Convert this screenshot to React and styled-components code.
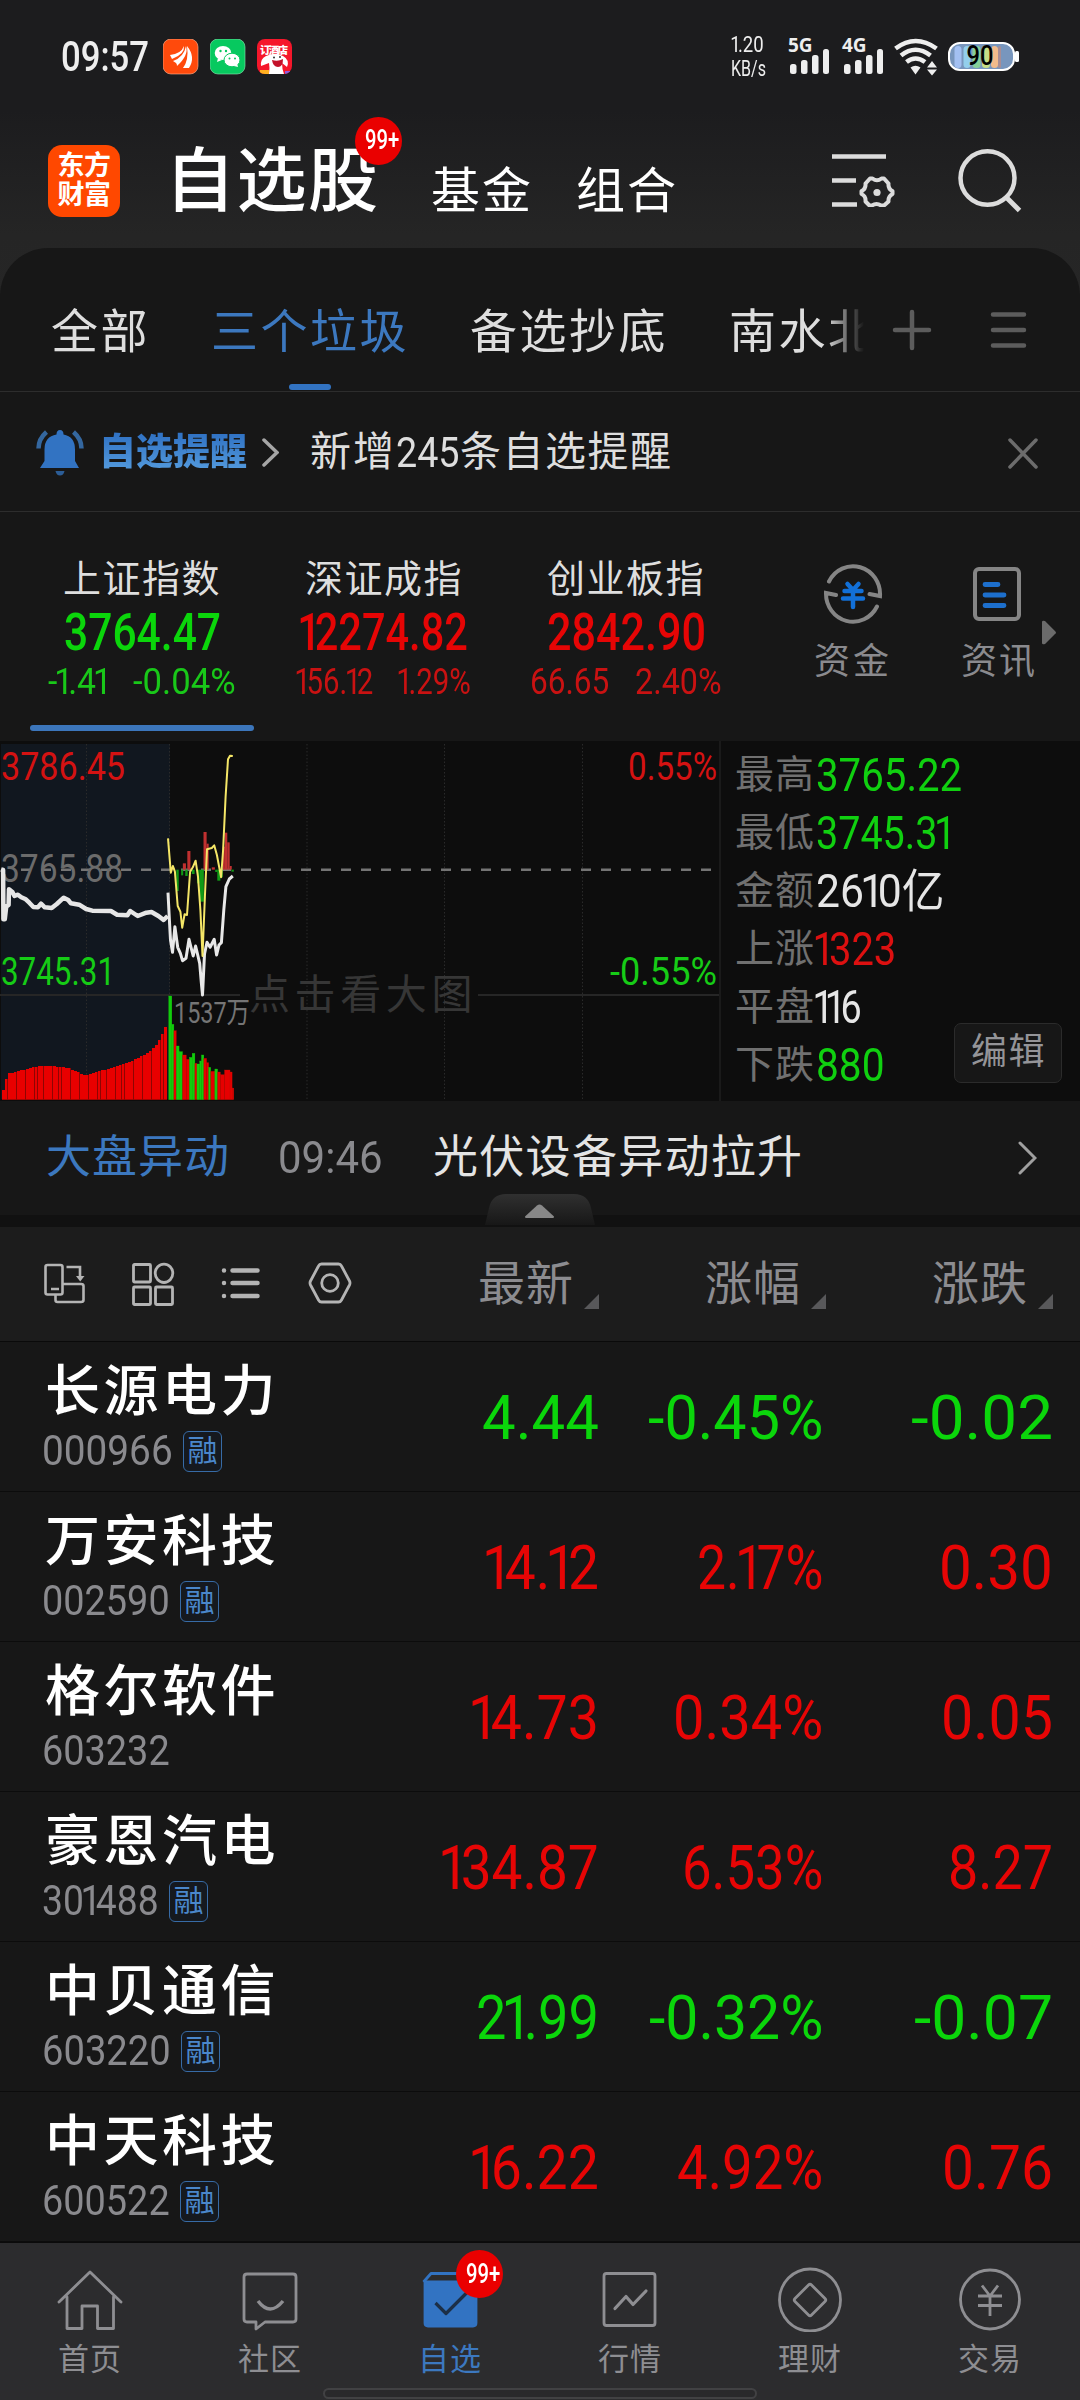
import React, { useLayoutEffect, useRef, useState } from "react";
import styled, { createGlobalStyle } from "styled-components";

const GREEN = "#0bd60b";
const RED = "#e60505";
const BLUE = "#3273c2";
const FONT = `Roboto, "Noto Sans CJK SC", sans-serif`;

const Global = createGlobalStyle`
  * { box-sizing: border-box; }
  html, body { margin: 0; padding: 0; background: #171717; }
  body { font-family: ${FONT}; width: 1080px; }
  svg { display: block; flex: none; }
`;

/* ---------- text set to a given width ---------- */
const FitBox = styled.span`
  display: inline-flex;
  flex: none;
  width: ${(p) => p.$w}px;
  height: ${(p) => p.$size * 1.1}px;
  line-height: ${(p) => p.$size * 1.1}px;
  font-size: ${(p) => p.$size}px;
  font-weight: ${(p) => p.$weight || 400};
  color: ${(p) => p.$color || "inherit"};
  white-space: nowrap;
`;
const FitInner = styled.span`
  display: inline-block;
  flex: none;
  transform-origin: 0 50%;
`;
const NarrowOne = styled.span`
  margin: 0 -0.15em 0 -0.09em;
`;

function Fit({ w, size, weight, color, children }) {
  const ref = useRef(null);
  const [scale, setScale] = useState(1);
  useLayoutEffect(() => {
    setScale(w / ref.current.offsetWidth);
  }, [w, size, weight, children]);
  return (
    <FitBox $w={w} $size={size} $weight={weight} $color={color}>
      <FitInner ref={ref} style={{ transform: `scaleX(${scale})` }}>
        {children.split(/(1)/).map((part, i) => (part === "1" ? <NarrowOne key={i}>1</NarrowOne> : part))}
      </FitInner>
    </FitBox>
  );
}

const Text = styled.span`
  flex: none;
  font-size: ${(p) => p.$size}px;
  line-height: ${(p) => p.$lh || p.$size * 1.2}px;
  letter-spacing: ${(p) => p.$ls || 0}px;
  font-weight: ${(p) => p.$weight || 400};
  color: ${(p) => p.$color || "#dedede"};
  white-space: nowrap;
`;

/* ---------- page ---------- */
const Page = styled.div`
  width: 1080px;
  height: 2400px;
  overflow: hidden;
  display: flex;
  flex-direction: column;
  background: linear-gradient(#1c1c1e 0, #1c1c1e 110px, #252525 235px, #262626 300px, #171717 301px);
`;

const StatusBar = styled.div`
  height: 114px;
  padding: 0 61px 0 61px;
  display: flex;
  align-items: center;
  color: #eee;
`;
const StatusApps = styled.div`
  display: flex;
  gap: 11px;
  margin-left: 14px;
  flex: 1;
  padding-top: 1px;
`;
const NetSpeed = styled.div`
  display: flex;
  flex-direction: column;
  align-items: center;
  width: 36px;
  margin-right: 22px;
  padding-top: 1px;
`;
const Signals = styled.div`
  display: flex;
  gap: 13px;
  margin-right: 11px;
`;
const Signal = styled.div`
  position: relative;
  width: 41px;
  height: 38px;
  font: 700 19px/15px "Open Sans", sans-serif;
  svg { margin-top: -5px; }
`;
const BatterySlot = styled.div`
  margin-left: 10px;
`;

const Header = styled.div`
  height: 135px;
  display: flex;
  align-items: flex-start;
  padding-left: 48px;
`;
const Logo = styled.div`
  width: 72px;
  height: 72px;
  margin-top: 31px;
  border-radius: 14px;
  background: #ff4800;
  color: #fff;
  display: flex;
  flex-direction: column;
  align-items: center;
  justify-content: center;
  font-size: 27px;
  font-weight: 700;
  line-height: 29px;
  letter-spacing: -0.5px;
`;
const MainTitle = styled.div`
  position: relative;
  margin: 25px 0 0 45px;
  width: 266px;
  height: 86px;
`;
const Badge = styled.div`
  position: absolute;
  left: ${(p) => p.$x}px;
  top: ${(p) => p.$y}px;
  width: 47px;
  height: 48px;
  border-radius: 50%;
  background: #ea0000;
  color: #fff;
  display: flex;
  align-items: center;
  justify-content: center;
  padding-left: 6px;
`;
const HeaderLinks = styled.div`
  display: flex;
  gap: 43px;
  margin-top: 48px;
  flex: 1;
`;
const HeaderIcons = styled.div`
  display: flex;
  gap: 63px;
  margin: 33px 58px 0 0;
`;

const Panel = styled.div`
  flex: 1;
  border-radius: 48px 48px 0 0;
  background: #171717;
  display: flex;
  flex-direction: column;
`;

const Tabs = styled.div`
  height: 144px;
  border-bottom: 1px solid #2d2d2d;
  display: flex;
  align-items: center;
`;
const TabScroll = styled.div`
  width: 866px;
  height: 100%;
  display: flex;
  gap: 61px;
  padding-left: 51px;
  overflow: hidden;
  mask-image: linear-gradient(90deg, #000 825px, transparent 864px);
`;
const Tab = styled.div`
  flex: none;
  display: flex;
  flex-direction: column;
  align-items: center;
  padding-top: 56px;
  height: 143px;
`;
const TabMark = styled.div`
  width: 42px;
  height: 6px;
  margin-top: 24px;
  border-radius: 3px;
  background: ${BLUE};
`;
const TabTools = styled.div`
  display: flex;
  gap: 57px;
  padding: 21px 0 0 25px;
`;

const AlertRow = styled.div`
  height: 120px;
  border-bottom: 1px solid #2d2d2d;
  display: flex;
  align-items: center;
  padding: 2px 41px 0 35px;
`;
const AlertTag = styled.span`
  margin: 0 15px 0 15px;
  font-size: 37px;
  line-height: 46px;
  font-weight: 900;
  background: linear-gradient(#3173c4 10%, #549bdd 90%);
  -webkit-background-clip: text;
  color: transparent;
`;
const AlertText = styled.div`
  flex: 1;
  display: flex;
  align-items: center;
  margin-left: 31px;
`;

const Indices = styled.div`
  height: 229px;
  display: flex;
  padding-left: 21px;
`;
const IndexCard = styled.div`
  width: 242px;
  display: flex;
  flex-direction: column;
  align-items: center;
  padding-top: 42px;
`;
const IndexValue = styled.div`
  height: 56px;
  display: flex;
  align-items: center;
  margin-top: 1px;
`;
const IndexDelta = styled.div`
  height: 36px;
  display: flex;
  gap: 26px;
  align-items: center;
  margin-top: 4px;
`;
const IndexMark = styled.div`
  width: 224px;
  height: 6px;
  margin-top: 24px;
  border-radius: 3px;
  background: #3c76bb;
`;
const Shortcut = styled.div`
  width: ${(p) => p.$w}px;
  display: flex;
  flex-direction: column;
  align-items: center;
  padding-top: 51px;
  gap: 18px;
  svg { margin-right: ${(p) => p.$shift || 0}px; }
`;
const MoreArrow = styled.div`
  margin-left: 2px;
`;

const ChartArea = styled.div`
  height: 360px;
  display: flex;
  background: #0d0d0d;
`;
const Quotes = styled.div`
  position: relative;
  width: 361px;
  border-left: 2px solid #1a1a1a;
  padding: 5px 0 0 14px;
`;
const QuoteLine = styled.div`
  height: 58px;
  display: flex;
  align-items: center;
  gap: 1px;
`;
const EditButton = styled.button`
  position: absolute;
  left: 233px;
  top: 282px;
  width: 108px;
  height: 60px;
  border: 1px solid #2b2b2b;
  border-radius: 7px;
  background: #171717;
  padding: 0 0 1px 1px;
  font-family: ${FONT};
`;

const Ticker = styled.div`
  position: relative;
  height: 114px;
  display: flex;
  align-items: center;
  padding: 0 43px 0 46px;
`;
const TickerTime = styled.div`
  display: flex;
  margin: 0 50px 0 48px;
`;
const TickerTitle = styled.div`
  flex: 1;
  display: flex;
`;
const Handle = styled.div`
  position: absolute;
  left: 484px;
  top: 92px;
`;
const Strip = styled.div`
  height: 12px;
  background: #111;
`;

const TableHead = styled.div`
  height: 115px;
  background: #1c1c1c;
  border-bottom: 1px solid #0a0a0a;
  display: flex;
  align-items: center;
  padding-left: 43px;
`;
const HeadTools = styled.div`
  width: 330px;
  display: flex;
  gap: 45.5px;
`;
const HeadCell = styled.div`
  width: 227px;
  display: flex;
  justify-content: flex-end;
  align-items: center;
  gap: 10px;
  svg { margin-top: 35px; }
`;

const Row = styled.div`
  height: 150px;
  border-bottom: 1px solid #0c0c0c;
  display: flex;
  padding: 0 26px 0 42px;
`;
const NameCell = styled.div`
  width: 330px;
  display: flex;
  flex-direction: column;
  padding-top: 14px;
`;
const StockName = styled(Text)`
  margin-left: 3px;
`;
const CodeLine = styled.div`
  height: 44px;
  margin-top: 3px;
  display: flex;
  align-items: center;
  gap: 10px;
`;
const Tag = styled.span`
  width: 39px;
  height: 41px;
  border: 1.5px solid #376ba6;
  border-radius: 6px;
  color: #4a87cb;
  background: #15191f;
  font-size: 30px;
  line-height: 37px;
  text-align: center;
`;
const ValueCell = styled.div`
  width: 227px;
  height: 150px;
  display: flex;
  justify-content: flex-end;
  align-items: center;
  padding: 2px ${(p) => p.$pad}px 0 0;
`;

const Nav = styled.div`
  position: relative;
  height: 158px;
  margin-top: auto;
  border-top: 1px solid #0b0b0b;
  background: #2c2c2e;
  display: flex;
`;
const NavItem = styled.div`
  position: relative;
  width: 180px;
  height: 157px;
  display: flex;
  flex-direction: column;
  align-items: center;
  padding-top: 23px;
  gap: 6px;
`;
const HomeBar = styled.div`
  position: absolute;
  left: 323px;
  bottom: 1px;
  width: 434px;
  height: 11px;
  border-radius: 6px;
  border: 2px solid #414143;
  background: #29292b;
`;

/* ---------- status icons ---------- */
const AppFund = () => (
  <svg width="36" height="36" viewBox="0 0 36 36">
    <rect width="35" height="35" rx="8" fill="#ff4a0c" stroke="#ffb394" strokeWidth=".6" />
    <path d="M7 16q11-1 14-9q1 8-12 13zM10 22q11-4 13-15q3 9-9 20q0-2-1-3zM20 29q6-8 4-22q9 11 2 22z" fill="#fff" />
  </svg>
);
const AppChat = () => (
  <svg width="36" height="36" viewBox="0 0 36 36">
    <rect width="35" height="35" rx="8" fill="#07c95f" stroke="#8ee5b4" strokeWidth=".6" />
    <ellipse cx="13" cy="14" rx="8.3" ry="7" fill="#fff" />
    <path d="M8 19l-1 4 5-2z" fill="#fff" />
    <ellipse cx="22" cy="21" rx="8" ry="6.8" fill="#fff" stroke="#07c95f" strokeWidth="1" />
    <path d="M24 27l4 1-1-4z" fill="#fff" />
    <g fill="#07c95f"><circle cx="10.5" cy="12" r="1.2" /><circle cx="16" cy="12" r="1.2" /><circle cx="19.5" cy="19.5" r="1" /><circle cx="25" cy="19.5" r="1" /></g>
  </svg>
);
const AppHotel = () => (
  <svg width="36" height="36" viewBox="0 0 36 36">
    <defs><clipPath id="hc"><rect width="35" height="35" rx="8" /></clipPath></defs>
    <g clipPath="url(#hc)">
      <rect width="36" height="36" fill="#f5172b" />
      <path d="M4 27Q3 20 9 17q9-4 17 0q7 4 4 11l-5-4q0 6 2 11H12q1-6 0-11z" fill="#fff" />
      <path d="M15 21q6 2 11-1q0 8-5 8q-5 0-6-7z" fill="#c3122a" />
      <circle cx="17" cy="18.500" r="1" fill="#333" /><circle cx="23" cy="18" r="1" fill="#333" />
      <path d="M3 31h9v5H3z" fill="#ffb020" /><path d="M28 32h7v4h-7z" fill="#8c5be0" />
      <text x="3" y="14.5" fontSize="10.5" fontWeight="900" fill="#fff" textLength="28" fontFamily='"Noto Sans CJK SC", sans-serif'>订酒店</text>
    </g>
  </svg>
);
const Bars = () => (
  <svg width="41" height="27" viewBox="0 0 41 27" fill="#eee">
    <rect x="2" y="16" width="6.5" height="10" rx="2.5" />
    <rect x="13" y="12" width="6.5" height="14" rx="2.5" />
    <rect x="24" y="7" width="6.5" height="19" rx="2.5" />
    <rect x="35" y="1" width="6" height="25" rx="2.5" />
  </svg>
);
const Wifi = () => (
  <svg width="44" height="38" viewBox="0 0 44 38" fill="none" stroke="#eee" strokeWidth="4.6">
    <path d="M1.5 10.5Q21.500-4.500 42.500 10.500" />
    <path d="M7 17.500Q21.500 6 36.500 17.500" />
    <path d="M12.500 24Q21.500 17 31 24" />
    <path d="M16.500 29.500q5-3.500 10 0l-5 7z" fill="#eee" stroke="none" />
    <path d="M38 23l5 6.500H33zM33 31.500h10l-5 6z" fill="#eee" stroke="none" />
  </svg>
);
const Battery = () => (
  <svg width="71" height="30" viewBox="0 0 71 30">
    <rect x="1" y="1" width="65" height="27" rx="11" fill="#7896bd" stroke="#fff" strokeWidth="2" />
    <rect x="67" y="9" width="4" height="11" rx="1.500" fill="#fff" />
    <rect x="6.500" y="4" width="7" height="22" rx="3.500" fill="#a3c0f2" />
    <rect x="15.500" y="4" width="7" height="22" rx="3.500" fill="#93cfec" />
    <rect x="24.500" y="4" width="8" height="22" rx="3.500" fill="#86cf98" />
    <rect x="34" y="4" width="8" height="22" rx="3.500" fill="#c6de87" />
    <rect x="43" y="4" width="7" height="22" rx="3.500" fill="#f2bb8b" />
    <rect x="50" y="4" width="3" height="22" rx="1.500" fill="#a88d94" />
    <text x="18.500" y="22.500" fontSize="27" fontWeight="500" textLength="27" lengthAdjust="spacingAndGlyphs" fill="#000">90</text>
  </svg>
);

/* ---------- header icons ---------- */
const ListGear = () => (
  <svg width="64" height="60" viewBox="0 0 64 60" fill="none" stroke="#dcdcdc" strokeWidth="4.500">
    <path d="M1 9.500h54M1 33.500h24M1 57.500h25" />
    <path strokeWidth="4" strokeLinejoin="round" d="M39 31.500h2.500q4.500 3.500 9 0H53l4.500 5q-.5 5.500 4 7.500v3q-4.500 2.500-4 7.500l-4.500 4H50q-4.500-3-9 0h-2.500l-4-4q.5-5.500-4-7.500v-3q4.500-2 4-7.500z" />
    <circle cx="46" cy="45.500" r="3.600" fill="#dcdcdc" stroke="none" />
  </svg>
);
const Search = () => (
  <svg width="64" height="66" viewBox="0 0 64 66" fill="none" stroke="#dcdcdc" strokeWidth="4.500">
    <ellipse cx="29.500" cy="31" rx="27" ry="26.800" />
    <path d="M48 50l13.500 13.500" strokeWidth="5" />
  </svg>
);

const Bell = () => (
  <svg width="49" height="46" viewBox="0 0 49 46">
    <path d="M25 0q3.500 0 3.500 4.500q11.500 2 11.500 15V31l4 7H5l4.500-7V19.500q0-13 12-15Q21.500 0 25 0z" fill={BLUE} />
    <path d="M20.500 41h9q-1 4.500-4.500 4.500T20.500 41z" fill="#2c5d96" />
    <path d="M3.500 18.500Q3.500 9 11.500 2M46.500 18.500Q46.500 9 38.500 2" fill="none" stroke="#34679f" strokeWidth="4.500" />
  </svg>
);
const Chevron = ({ w, h, sw, color }) => (
  <svg width={w} height={h} viewBox={`0 0 ${w} ${h}`} fill="none" stroke={color} strokeWidth={sw} strokeLinecap="round">
    <path d={`M2 2L${w - 2} ${h / 2}L2 ${h - 2}`} />
  </svg>
);

/* ---------- chart ---------- */
const SX = 2.904;
const px = (x) => x / SX;
const py = (y) => y / 3 - 11;
const line = (pts) => pts.map(([x, y]) => `${px(x).toFixed(1)},${py(y).toFixed(1)}`).join(" ");

const AUCTION = [[3, 418], [9, 420], [10, 568], [14, 568], [18, 530], [25, 525], [26, 478], [36, 486], [42, 498], [52, 494], [62, 502], [75, 508], [85, 518], [97, 531], [110, 532], [119, 521], [130, 532], [150, 534], [165, 522], [185, 503], [198, 510], [206, 520], [230, 524], [250, 537], [268, 542], [322, 543], [340, 554], [370, 556], [378, 543], [400, 558], [425, 548], [440, 546], [460, 558], [475, 570], [487, 558]];
const PRICE = [[488, 488], [492, 570], [495, 630], [501, 667], [508, 590], [516, 652], [524, 670], [530, 692], [540, 685], [549, 628], [561, 678], [568, 648], [580, 700], [585, 760], [588, 795], [594, 672], [601, 637], [610, 652], [622, 628], [629, 675], [636, 645], [643, 638], [650, 540], [656, 470], [666, 447], [676, 438]];
const AVERAGE = [[488, 325], [496, 428], [502, 408], [508, 425], [516, 528], [524, 545], [529, 593], [536, 553], [543, 555], [552, 425], [560, 412], [568, 392], [575, 440], [582, 540], [588, 678], [595, 500], [601, 358], [615, 354], [622, 346], [630, 375], [642, 442], [648, 360], [655, 200], [662, 88], [668, 77], [676, 78]];
const MOMENTUM = [[531, 540, 400, 1], [544, 553, 363, 1], [591, 600, 306, 1], [600, 606, 341, 1], [615, 624, 412, 1], [647, 653, 350, 1], [653, 660, 308, 1], [660, 667, 337, 1], [667, 673, 408, 1], [512, 519, 483, 0], [526, 532, 436, 0], [538, 545, 438, 0], [557, 565, 432, 0], [572, 580, 460, 0], [580, 592, 515, 0], [625, 631, 426, 0], [631, 640, 452, 0], [640, 647, 442, 0], [672, 679, 425, 0]];
const ENVELOPE = [[8, 1083], [16, 1052], [24, 1031], [50, 1024], [90, 1013], [120, 1008], [160, 1009], [200, 1015], [245, 1036], [270, 1030], [300, 1020], [350, 1005], [400, 985], [440, 960], [460, 935], [475, 900], [489, 866]];
const VOLUME = [[490, 499, 798, 0], [499, 505, 883, 0], [505, 512, 902, 1], [512, 520, 948, 0], [520, 530, 965, 0], [530, 541, 975, 1], [541, 550, 988, 1], [550, 558, 982, 0], [558, 566, 970, 0], [566, 572, 1000, 1], [572, 580, 1002, 0], [580, 585, 993, 0], [585, 592, 975, 0], [592, 600, 985, 1], [600, 606, 998, 1], [606, 612, 1012, 0], [612, 624, 1024, 1], [624, 632, 1017, 0], [632, 640, 1026, 1], [640, 652, 1034, 1], [652, 668, 1020, 1], [668, 674, 1026, 1], [674, 679, 1074, 1]];

function envelopeAt(x) {
  for (let i = 1; i < ENVELOPE.length; i++) {
    const [x0, y0] = ENVELOPE[i - 1];
    const [x1, y1] = ENVELOPE[i];
    if (x <= x1) return y0 + ((y1 - y0) * (x - x0)) / (x1 - x0);
  }
  return 866;
}
const AUCTION_BARS = Array.from({ length: 55 }, (_, i) => 2 + i * 3);

const ChartText = ({ x, y, w, size = 39, fill, children }) => (
  <text x={x} y={y} fontSize={size} fill={fill} textLength={w} lengthAdjust="spacingAndGlyphs">{children}</text>
);

const Chart = () => (
  <svg width="719" height="360" viewBox="0 0 719 360" fontFamily={FONT}>
    <rect x="1" y="3" width="169" height="355" fill="#11171f" />
    {[86.5, 169.5, 307, 444.5, 582.5].map((x) => (
      <path key={x} d={`M${x} 3V358`} stroke="#2a2a2a" strokeWidth="1" strokeDasharray="1.5 2" />
    ))}
    <path d="M0 254H240M478 254H719" stroke="#262626" strokeWidth="2" />
    <path d="M21 128.700H713" stroke="#747474" strokeWidth="2.500" strokeDasharray="10 10" />
    <ChartText x={1} y={39} w={124} fill="#d41212">3786.45</ChartText>
    <ChartText x={1} y={141} w={122} fill="#6b6b6b">3765.88</ChartText>
    <ChartText x={1} y={244} w={114} fill="#16cc16">3745.31</ChartText>
    <ChartText x={628} y={39} w={89} fill="#d41212">0.55%</ChartText>
    <ChartText x={610} y={244} w={107} fill="#16cc16">-0.55%</ChartText>
    {AUCTION_BARS.map((x, i) => {
      const top = Math.round(py(envelopeAt((x + 1) * SX)));
      return (
        <React.Fragment key={x}>
          <rect x={x} y={top} width="3" height={358.7 - top} fill="#e80000" />
          {(i % 3 === 1 || i % 7 === 4) && <rect x={x + 2} y={top} width="1" height={358.7 - top} fill="#8d0503" />}
        </React.Fragment>
      );
    })}
    {VOLUME.map(([a, b, top, up]) => (
      <rect key={a} x={px(a)} y={py(top)} width={px(b - a)} height={py(1109) - py(top)} fill={up ? "#e60000" : "#12cc0c"} stroke={up ? "#c01000" : "#12cc0c"} strokeWidth=".3" />
    ))}
    {MOMENTUM.map(([a, b, v, up]) => (
      <rect key={`${a}${v}`} x={px(a)} y={py(Math.min(v, 419))} width={px(b - a)} height={Math.abs(v - 419) / 3} fill={up ? "#c03030" : "#119a16"} />
    ))}
    <polyline points={line(AUCTION)} fill="none" stroke="#e6e6e6" strokeWidth="4.500" strokeLinejoin="round" />
    <polyline points={line(PRICE)} fill="none" stroke="#e8e8e8" strokeWidth="3" strokeLinejoin="round" />
    <polyline points={line(AVERAGE)} fill="none" stroke="#f4e667" strokeWidth="2" strokeLinejoin="round" />
    <ChartText x={174} y={282} w={76} size={29} fill="#757575">1537万</ChartText>
    <text x="249" y="268" fontSize="41" letterSpacing="4.600" fill="#363636">点击看大图</text>
  </svg>
);

/* ---------- table header icons ---------- */
const ToolSwap = () => (
  <svg width="42" height="42" viewBox="0 0 42 42" fill="none" stroke="#b4b4b4" strokeWidth="2.600">
    <rect x="2.500" y="3" width="17" height="29.500" rx="2" />
    <path d="M8 27h8M12.500 32.500v5.500q0 2 2 2h23.500q2.500 0 2.500-2V24q0-2-2.500-2H20M23.500 5h13.500v12" />
    <path d="M33 14h8.500l-4.300 5.500z" fill="#b4b4b4" stroke="none" />
  </svg>
);
const ToolGrid = () => (
  <svg width="44" height="44" viewBox="0 0 44 44" fill="none" stroke="#b4b4b4" strokeWidth="2.800">
    <rect x="2.500" y="2.500" width="17" height="17.500" rx="1" />
    <ellipse cx="33" cy="11.300" rx="8.800" ry="9.200" />
    <rect x="2.500" y="25" width="17" height="17.500" rx="1" />
    <rect x="24.500" y="25" width="17" height="17.500" rx="1" />
  </svg>
);
const ToolList = () => (
  <svg width="42" height="42" viewBox="0 0 42 42" stroke="#b4b4b4" strokeWidth="4.500" strokeLinecap="round">
    <path d="M4 8.500v.1M4 21v.1M4 34v.1M12.500 8.500h25M12.500 21h25M12.500 34h25" />
  </svg>
);
const ToolHex = () => (
  <svg width="44" height="42" viewBox="0 0 44 42" fill="none" stroke="#b4b4b4" strokeWidth="2.800" strokeLinejoin="round">
    <path d="M13.500 2h17q2 0 3 2l8 15q1 2 0 4l-8 15q-1 2-3 2h-17q-2 0-3-2L2.500 23q-1-2 0-4l8-15q1-2 3-2z" />
    <circle cx="22" cy="21" r="8.300" />
  </svg>
);
const Corner = () => (
  <svg width="16" height="16" viewBox="0 0 16 16"><path d="M15 0v15H0z" fill="#58585a" /></svg>
);

/* ---------- nav icons ---------- */
const NavIcon = styled.svg.attrs({ width: 66, height: 66, viewBox: "0 0 66 66" })`
  fill: none;
  stroke: ${(p) => p.$color || "#8e8e92"};
  stroke-width: 2.8;
  stroke-linejoin: round;
`;
const NAV = [
  ["首页", <NavIcon><path strokeLinecap="round" d="M2 36L33 6l31 30M10 31v31.500h15V40h15.500v22.500h16V31" /></NavIcon>],
  ["社区", <NavIcon><path d="M10 8h46q3 0 3 3v42q0 3-3 3H28l-9 7v-7h-9q-3 0-3-3V11q0-3 3-3z" /><path strokeWidth="3.400" d="M21 35q12 16 25 0" /></NavIcon>],
  ["自选", <NavIcon $color={BLUE}><path d="M6.500 16L14 7.500h46" /><path d="M8 16h51v41q0 3-3 3H11q-3 0-3-3z" fill={BLUE} /><path d="M18.500 37L29 47.500l21-21" stroke="#1c2f47" strokeWidth="3.200" /></NavIcon>],
  ["行情", <NavIcon><rect x="7" y="7.500" width="51" height="52" rx="2.500" /><path strokeWidth="3.200" strokeLinecap="round" d="M18 42.500L29 30.500l7 8L49 25" /></NavIcon>],
  ["理财", <NavIcon><ellipse cx="33" cy="34" rx="30.500" ry="31" /><path d="M31.500 19q1.500-1.500 3 0l13.500 13.500q1.500 1.500 0 3L34.500 49q-1.500 1.500-3 0L18 35.500q-1.500-1.500 0-3z" /></NavIcon>],
  ["交易", <NavIcon><circle cx="33" cy="33.500" r="29.500" /><path d="M25 19.500L33 30l8-10.500M33 30v20M21 30h24M21 39.500h24" /></NavIcon>],
];

/* ---------- data ---------- */
const INDICES = [
  { name: "上证指数", value: "3764.47", w: 157, a: "-1.41", aw: 59, b: "-0.04%", bw: 103, color: GREEN, on: true },
  { name: "深证成指", value: "12274.82", w: 167, a: "156.12", aw: 76, b: "1.29%", bw: 72, color: RED },
  { name: "创业板指", value: "2842.90", w: 159, a: "66.65", aw: 79, b: "2.40%", bw: 87, color: RED },
];
const QUOTES = [
  ["最高", "3765.22", 146, "#10d010"],
  ["最低", "3745.31", 134, "#10d010"],
  ["金额", "2610亿", 128, "#e6e6e6"],
  ["上涨", "1323", 80, "#dc1010"],
  ["平盘", "116", 46, "#e6e6e6"],
  ["下跌", "880", 69, "#10d010"],
];
const STOCKS = [
  ["长源电力", "000966", 131, true, GREEN, ["4.44", 117], ["-0.45%", 175], ["-0.02", 142]],
  ["万安科技", "002590", 128, true, RED, ["14.12", 112], ["2.17%", 126], ["0.30", 114]],
  ["格尔软件", "603232", 128, false, RED, ["14.73", 126], ["0.34%", 150], ["0.05", 112]],
  ["豪恩汽电", "301488", 117, true, RED, ["134.87", 156], ["6.53%", 141], ["8.27", 105]],
  ["中贝通信", "603220", 129, true, GREEN, ["21.99", 123], ["-0.32%", 174], ["-0.07", 139]],
  ["中天科技", "600522", 128, true, RED, ["16.22", 126], ["4.92%", 146], ["0.76", 111]],
];

export default function App() {
  return (
    <>
      <Global />
      <Page>
        <StatusBar>
          <Fit w={88} size={43} weight={500}>09:57</Fit>
          <StatusApps><AppFund /><AppChat /><AppHotel /></StatusApps>
          <NetSpeed>
            <Fit w={32} size={22}>1.20</Fit>
            <Fit w={35} size={22}>KB/s</Fit>
          </NetSpeed>
          <Signals>
            <Signal>5G<Bars /></Signal>
            <Signal>4G<Bars /></Signal>
          </Signals>
          <Wifi />
          <BatterySlot><Battery /></BatterySlot>
        </StatusBar>

        <Header>
          <Logo><span>东方</span><span>财富</span></Logo>
          <MainTitle>
            <Text $size={70} $ls={1.5} $lh={86} $color="#fff" $weight={500}>自选股</Text>
            <Badge $x={190} $y={-22}><Fit w={34} size={28} weight={500}>99+</Fit></Badge>
          </MainTitle>
          <HeaderLinks>
            <Text $size={49} $ls={2} $lh={60} $color="#fff">基金</Text>
            <Text $size={49} $ls={2} $lh={60} $color="#fff">组合</Text>
          </HeaderLinks>
          <HeaderIcons><ListGear /><Search /></HeaderIcons>
        </Header>

        <Panel>
          <Tabs>
            <TabScroll>
              <Tab><Text $size={47} $ls={2.5}>全部</Text></Tab>
              <Tab><Text $size={47} $ls={2.5} $color="#3c78bf">三个垃圾</Text><TabMark /></Tab>
              <Tab><Text $size={47} $ls={2.5}>备选抄底</Text></Tab>
              <Tab><Text $size={47} $ls={2.5}>南水北</Text></Tab>
            </TabScroll>
            <TabTools>
              <svg width="42" height="42" viewBox="0 0 42 42" stroke="#5c5c5c" strokeWidth="4.500" strokeLinecap="round"><path d="M4 21h34M21 3v36" /></svg>
              <svg width="40" height="42" viewBox="0 0 40 42" stroke="#5c5c5c" strokeWidth="4.500" strokeLinecap="round"><path d="M3 5.500h31M3 21h31M3 36.500h31" /></svg>
            </TabTools>
          </Tabs>

          <AlertRow>
            <Bell />
            <AlertTag>自选提醒</AlertTag>
            <Chevron w={17} h={29} sw={3.5} color="#a6a6a6" />
            <AlertText>
              <Text $size={41} $ls={2}>新增</Text>
              <Fit w={64} size={43} color="#dedede">245</Fit>
              <Text $size={41} $ls={1.5}>条自选提醒</Text>
            </AlertText>
            <svg width="32" height="32" viewBox="0 0 32 32" stroke="#6c6c6c" strokeWidth="3.500" strokeLinecap="round"><path d="M3 3l26 27M29 3L3 30" /></svg>
          </AlertRow>

          <Indices>
            {INDICES.map((d) => (
              <IndexCard key={d.name}>
                <Text $size={38} $ls={1.5} $lh={50}>{d.name}</Text>
                <IndexValue><Fit w={d.w} size={51} weight={500} color={d.color}>{d.value}</Fit></IndexValue>
                <IndexDelta>
                  <Fit w={d.aw} size={36} color={d.on ? "#19c819" : "#c91212"}>{d.a}</Fit>
                  <Fit w={d.bw} size={36} color={d.on ? "#19c819" : "#c91212"}>{d.b}</Fit>
                </IndexDelta>
                {d.on && <IndexMark />}
              </IndexCard>
            ))}
            <Shortcut $w={212}>
              <svg width="62" height="62" viewBox="0 0 62 62" fill="none" stroke="#858585" strokeWidth="4">
                <path strokeLinecap="round" d="M7 18.500A27 28 0 0 1 58 33L47.500 31M55 43.500A27 28 0 0 1 4 30L14 32" />
                <path stroke="#1270d8" strokeWidth="4.500" strokeLinecap="round" d="M25.500 21l5.500 6 5.500-6M22.500 28h17M21 35.500h20M31 28v16" />
              </svg>
              <Text $size={36} $ls={3} $lh={38} $color="#8a8a8e">资金</Text>
            </Shortcut>
            <Shortcut $w={80} $shift={4}>
              <svg width="50" height="62" viewBox="0 0 50 62" fill="none" stroke="#858585" strokeWidth="4">
                <rect x="3" y="6" width="44" height="50" rx="4" />
                <path stroke="#1d6fcc" strokeWidth="4.800" strokeLinecap="round" d="M13 21.500h13M13 32h19M13 42.500h19" />
              </svg>
              <Text $size={36} $ls={2} $lh={38} $color="#8a8a8e">资讯</Text>
            </Shortcut>
            <MoreArrow>
              <svg width="16" height="134" viewBox="0 0 16 134"><path d="M1 110q0-2 3-1l10 10q2 2 0 3L4 132q-3 1-3-1z" fill="#6b6b6b" /></svg>
            </MoreArrow>
          </Indices>

          <ChartArea>
            <Chart />
            <Quotes>
              {QUOTES.map(([label, value, w, color]) => (
                <QuoteLine key={label}>
                  <Text $size={39} $ls={1} $color="#707070">{label}</Text>
                  <Fit w={w} size={46} color={color}>{value}</Fit>
                </QuoteLine>
              ))}
              <EditButton><Text $size={36} $ls={1.5} $color="#949498">编辑</Text></EditButton>
            </Quotes>
          </ChartArea>

          <Ticker>
            <Text $size={45} $ls={1} $color="#3c78bf">大盘异动</Text>
            <TickerTime><Fit w={105} size={44} color="#8a8a8e">09:46</Fit></TickerTime>
            <TickerTitle><Text $size={45} $ls={1.3} $color="#e4e4e4">光伏设备异动拉升</Text></TickerTitle>
            <Chevron w={19} h={34} sw={3} color="#a0a0a0" />
            <Handle>
              <svg width="112" height="33" viewBox="0 0 112 33">
                <defs><linearGradient id="hg" x1="0" y1="0" x2="0" y2="1"><stop offset="0" stopColor="#303030" /><stop offset="1" stopColor="#171717" /></linearGradient></defs>
                <path d="M1 32L5 15Q8 1 22 1h68q14 0 17 14l4 17z" fill="url(#hg)" />
                <path d="M41 23.500l12-11q2.500-2 5 0l12 11q0 1.500-1 1.500H42q-1 0-1-1.500z" fill="#888" />
              </svg>
            </Handle>
          </Ticker>
          <Strip />

          <TableHead>
            <HeadTools><ToolSwap /><ToolGrid /><ToolList /><ToolHex /></HeadTools>
            {["最新", "涨幅", "涨跌"].map((t) => (
              <HeadCell key={t}><Text $size={47} $ls={1} $color="#8c8c90">{t}</Text><Corner /></HeadCell>
            ))}
          </TableHead>

          {STOCKS.map(([name, code, cw, margin, color, last, pct, chg]) => (
            <Row key={code}>
              <NameCell>
                <StockName $size={55} $ls={3.5} $lh={70} $weight={500} $color="#fff">{name}</StockName>
                <CodeLine>
                  <Fit w={cw} size={42} color="#8a8a8e">{code}</Fit>
                  {margin && <Tag>融</Tag>}
                </CodeLine>
              </NameCell>
              <ValueCell $pad={0}><Fit w={last[1]} size={62} color={color}>{last[0]}</Fit></ValueCell>
              <ValueCell $pad={3}><Fit w={pct[1]} size={62} color={color}>{pct[0]}</Fit></ValueCell>
              <ValueCell $pad={0}><Fit w={chg[1]} size={62} color={color}>{chg[0]}</Fit></ValueCell>
            </Row>
          ))}

          <Nav>
            {NAV.map(([label, icon], i) => (
              <NavItem key={label}>
                {icon}
                <Text $size={31} $ls={1} $lh={44} $color={i === 2 ? "#3c78bf" : "#8e8e92"}>{label}</Text>
                {i === 2 && <Badge $x={96} $y={7}><Fit w={34} size={28} weight={500}>99+</Fit></Badge>}
              </NavItem>
            ))}
            <HomeBar />
          </Nav>
        </Panel>
      </Page>
    </>
  );
}
